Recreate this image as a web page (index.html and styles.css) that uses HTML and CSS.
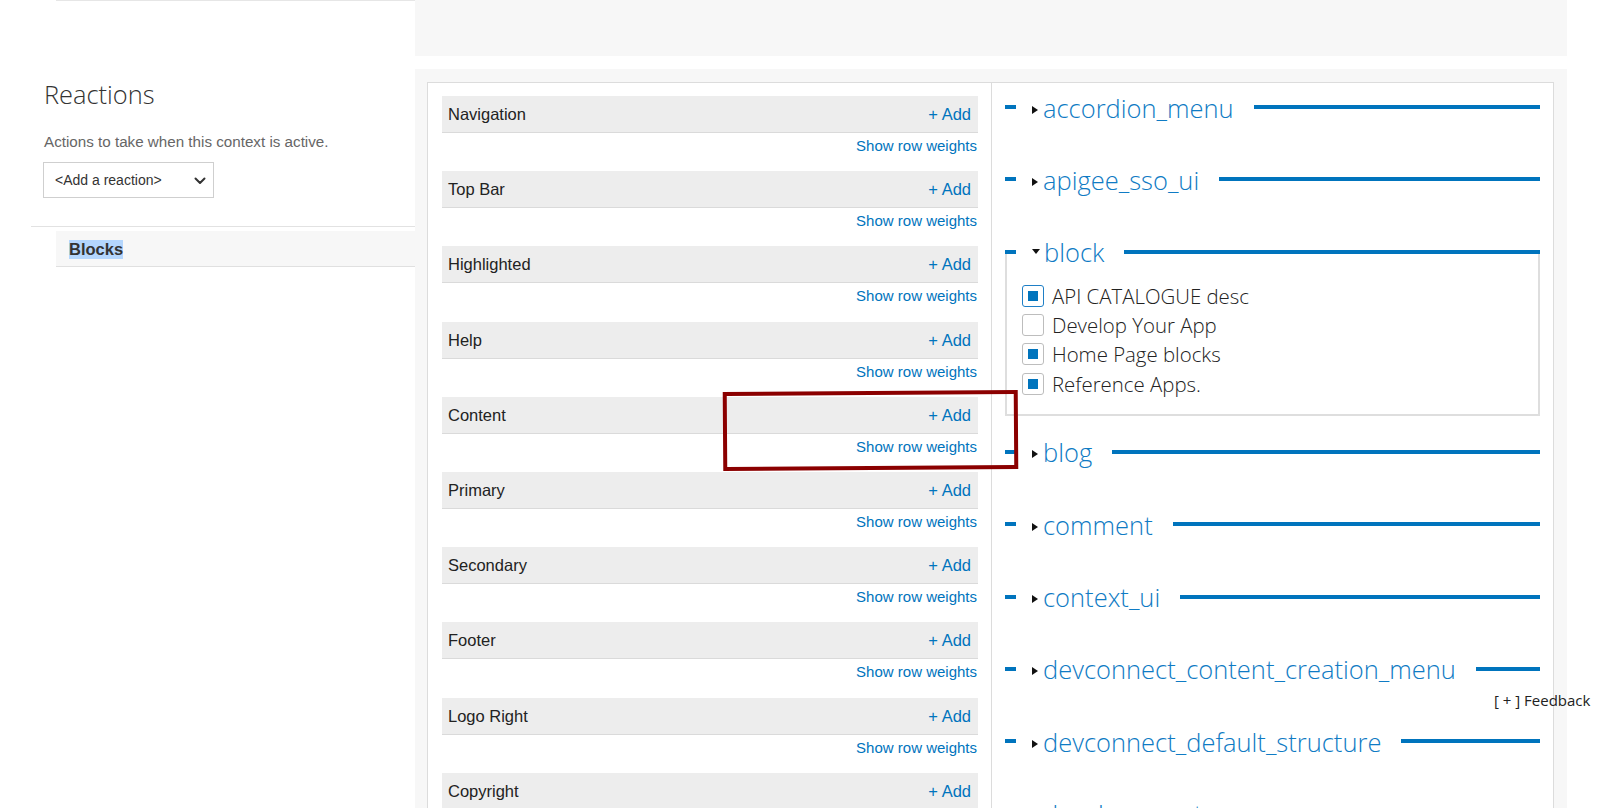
FILE: index.html
```html
<!DOCTYPE html>
<html lang="en">
<head>
<meta charset="utf-8">
<title>Context reactions – Blocks</title>
<link rel="stylesheet" href="styles.css">
</head>
<body>
<div class="page">
  <aside class="side">
    <div class="prev-line"></div>
    <h2 class="side-title">Reactions</h2>
    <p class="side-desc">Actions to take when this context is active.</p>
    <div class="select">
      <span>&lt;Add a reaction&gt;</span>
      <svg class="chev" width="12" height="8" viewBox="0 0 12 8"><path d="M1.5 1.5 L6 6 L10.5 1.5" fill="none" stroke="#333" stroke-width="2" stroke-linecap="round" stroke-linejoin="round"/></svg>
    </div>
    <div class="side-rule"></div>
    <div class="tab-row"><span class="tab-label">Blocks</span></div>
  </aside>

  <main class="main">
    <div class="top-panel"></div>
    <div class="panel">
      <div class="box">
        <div class="regions">
          <div class="region"><div class="region-head"><span>Navigation</span><a class="add">+ Add</a></div><div class="weights"><a>Show row weights</a></div></div>
          <div class="region"><div class="region-head"><span>Top Bar</span><a class="add">+ Add</a></div><div class="weights"><a>Show row weights</a></div></div>
          <div class="region"><div class="region-head"><span>Highlighted</span><a class="add">+ Add</a></div><div class="weights"><a>Show row weights</a></div></div>
          <div class="region"><div class="region-head"><span>Help</span><a class="add">+ Add</a></div><div class="weights"><a>Show row weights</a></div></div>
          <div class="region"><div class="region-head"><span>Content</span><a class="add">+ Add</a></div><div class="weights"><a>Show row weights</a></div></div>
          <div class="region"><div class="region-head"><span>Primary</span><a class="add">+ Add</a></div><div class="weights"><a>Show row weights</a></div></div>
          <div class="region"><div class="region-head"><span>Secondary</span><a class="add">+ Add</a></div><div class="weights"><a>Show row weights</a></div></div>
          <div class="region"><div class="region-head"><span>Footer</span><a class="add">+ Add</a></div><div class="weights"><a>Show row weights</a></div></div>
          <div class="region"><div class="region-head"><span>Logo Right</span><a class="add">+ Add</a></div><div class="weights"><a>Show row weights</a></div></div>
          <div class="region"><div class="region-head"><span>Copyright</span><a class="add">+ Add</a></div></div>
        </div>

        <div class="modules">
          <div class="fs collapsed"><div class="fs-head"><span class="dash"></span><span class="tri"></span><span class="label">accordion_menu</span><span class="rule"></span></div></div>
          <div class="fs collapsed"><div class="fs-head"><span class="dash"></span><span class="tri"></span><span class="label">apigee_sso_ui</span><span class="rule"></span></div></div>
          <div class="fs expanded">
            <div class="fs-head"><span class="dash"></span><span class="tri open"></span><span class="label">block</span><span class="rule"></span></div>
            <div class="fs-body">
              <label class="item"><span class="cb checked focus"></span><span>API CATALOGUE desc</span></label>
              <label class="item"><span class="cb"></span><span>Develop Your App</span></label>
              <label class="item"><span class="cb checked"></span><span>Home Page blocks</span></label>
              <label class="item"><span class="cb checked"></span><span>Reference Apps.</span></label>
            </div>
          </div>
          <div class="fs collapsed"><div class="fs-head"><span class="dash"></span><span class="tri"></span><span class="label">blog</span><span class="rule"></span></div></div>
          <div class="fs collapsed"><div class="fs-head"><span class="dash"></span><span class="tri"></span><span class="label">comment</span><span class="rule"></span></div></div>
          <div class="fs collapsed"><div class="fs-head"><span class="dash"></span><span class="tri"></span><span class="label">context_ui</span><span class="rule"></span></div></div>
          <div class="fs collapsed"><div class="fs-head"><span class="dash"></span><span class="tri"></span><span class="label">devconnect_content_creation_menu</span><span class="rule"></span></div></div>
          <div class="fs collapsed"><div class="fs-head"><span class="dash"></span><span class="tri"></span><span class="label">devconnect_default_structure</span><span class="rule"></span></div></div>
          <div class="fs collapsed"><div class="fs-head"><span class="dash"></span><span class="tri"></span><span class="label">devel_generate</span><span class="rule"></span></div></div>
        </div>
      </div>
    </div>
  </main>
</div>

<div class="annotation"></div>
<div class="feedback">[ + ] Feedback</div>
</body>
</html>
```

FILE: styles.css
```css
html, body {
  margin: 0;
  padding: 0;
  height: 808px;
  overflow: hidden;
  background: #fff;
}

body {
  font-family: "Liberation Sans", Arial, sans-serif;
  color: #222;
  position: relative;
}

.page {
  display: grid;
  grid-template-columns: 415px 1152px;
  align-items: start;
}

/* ---------- left side ---------- */
.side {
  display: flex;
  flex-direction: column;
  align-items: flex-start;
}

.prev-line {
  align-self: stretch;
  margin-left: 56px;
  border-top: 1px solid #e6e6e6;
}

.side-title {
  margin: 75px 0 0 44px;
  font-family: "Open Sans", sans-serif;
  font-weight: 300;
  font-size: 25.4px;
  line-height: 36px;
  color: #333;
}

.side-desc {
  margin: 19.5px 0 0 44px;
  font-size: 15.2px;
  line-height: 20px;
  color: #666;
}

.select {
  margin: 10.5px 0 0 43px;
  box-sizing: border-box;
  width: 171px;
  height: 36px;
  border: 1px solid #cfcfcf;
  background: #fff;
  display: flex;
  align-items: center;
  justify-content: space-between;
  padding: 0 7px 0 11px;
  font-size: 14px;
  color: #333;
}

.chev {
  display: block;
  margin-top: 1px;
}

.side-rule {
  align-self: stretch;
  margin: 28px 0 0 31px;
  border-top: 1px solid #e2e2e2;
}

.tab-row {
  align-self: stretch;
  margin: 4px 0 0 56px;
  height: 34px;
  border-bottom: 1px solid #e0e0e0;
  background: #f7f7f7;
  display: flex;
  align-items: center;
  padding: 1px 0 0 13px;
}

.tab-label {
  font-weight: bold;
  font-size: 16.5px;
  color: #333;
  background: #b4d6fd;
}

/* ---------- main ---------- */
.top-panel {
  height: 56px;
  background: #f7f7f7;
}

.panel {
  margin-top: 13px;
  background: #f7f7f7;
  padding: 13px 13px 0 12px;
}

.box {
  border: 1px solid #dcdcdc;
  background: #fff;
  display: grid;
  grid-template-columns: 563px 1fr;
  min-height: 900px;
}

.regions {
  padding: 13px 13px 0 14px;
}

.region-head {
  height: 35px;
  background: #ededed;
  border-bottom: 1px solid #dadada;
  display: flex;
  align-items: center;
  justify-content: space-between;
  padding: 1px 7px 0 6px;
  font-size: 16.5px;
  color: #222;
}

.add {
  color: #0074bd;
  font-size: 16.5px;
}

.weights {
  height: 38.2px;
  box-sizing: border-box;
  padding: 4px 1px 0 0;
  text-align: right;
  font-size: 15px;
  line-height: 18px;
}

.weights a {
  color: #0074bd;
}

.modules {
  border-left: 1px solid #dcdcdc;
  padding: 6px 13px 0 13px;
  font-family: "Open Sans", sans-serif;
}

.fs.collapsed {
  height: 72.4px;
}

.fs-head {
  height: 36px;
  display: flex;
  align-items: center;
}

.dash {
  flex: none;
  width: 11px;
  height: 4px;
  background: #0074bd;
}

.tri {
  flex: none;
  margin: 5px 0 0 16px;
  width: 0;
  height: 0;
  border-left: 6px solid #111;
  border-top: 4px solid transparent;
  border-bottom: 4px solid transparent;
}

.tri.open {
  margin: 0 0 0 16px;
  border-left: 4px solid transparent;
  border-right: 4px solid transparent;
  border-top: 5px solid #111;
  border-bottom: 0;
}

.label {
  flex: none;
  margin-left: 5px;
  padding-top: 1px;
  font-weight: 300;
  font-size: 25.5px;
  line-height: 36px;
  color: #0f7bc4;
}

.tri.open + .label {
  margin-left: 4px;
}

.rule {
  flex: 1;
  height: 4px;
  margin-left: 20px;
  background: #0074bd;
}

.fs-body {
  margin: -18px 0 18px 0;
  border: 2px solid #dedede;
  border-top: none;
  padding: 29.4px 14px 15.4px 15px;
}

.item {
  height: 29.3px;
  display: flex;
  align-items: center;
  gap: 8px;
  font-weight: 300;
  font-size: 20.4px;
  color: #222;
}

.cb {
  flex: none;
  box-sizing: border-box;
  width: 22px;
  height: 22px;
  border: 1.5px solid #bdbdbd;
  border-radius: 3px;
  background: #fff;
  display: flex;
  align-items: center;
  justify-content: center;
}

.cb.checked::after {
  content: "";
  width: 10px;
  height: 10px;
  background: #0074bd;
}

.cb.focus {
  border-color: #1f7fc6;
}

/* ---------- overlays ---------- */
.annotation {
  position: absolute;
  left: 723px;
  top: 391px;
  width: 295px;
  height: 79px;
  box-sizing: border-box;
  border: 4px solid #8b0000;
  transform: rotate(-0.4deg);
}

.feedback {
  position: absolute;
  left: 1494px;
  top: 689px;
  font-family: "Open Sans", sans-serif;
  font-size: 15px;
  line-height: 22px;
  color: #222;
  white-space: nowrap;
}
```
